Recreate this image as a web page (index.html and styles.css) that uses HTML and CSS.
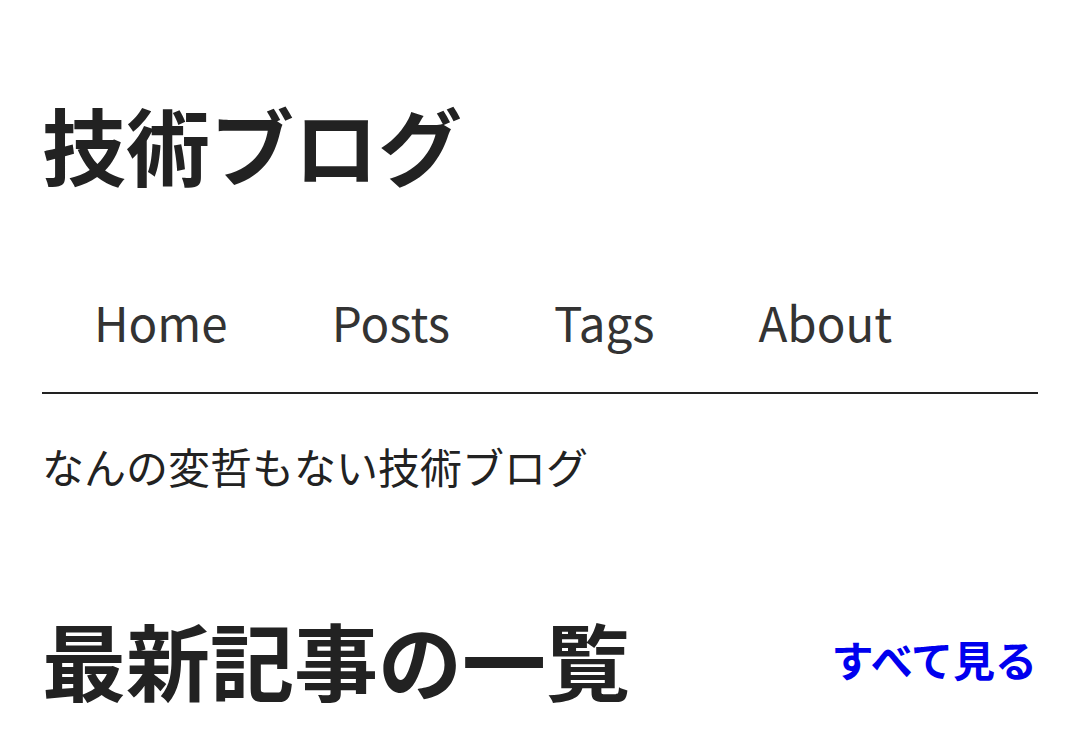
FILE: index.html
```html
<!DOCTYPE html>
<html lang="ja">
<head>
<meta charset="utf-8">
<title>技術ブログ</title>
<link rel="stylesheet" href="styles.css">
</head>
<body>
<header class="site-header">
  <h1 class="site-title">技術ブログ</h1>
  <nav class="site-nav">
    <ul class="nav-list">
      <li><a class="nav-link" href="#">Home</a></li>
      <li><a class="nav-link" href="#">Posts</a></li>
      <li><a class="nav-link" href="#">Tags</a></li>
      <li><a class="nav-link" href="#">About</a></li>
    </ul>
  </nav>
</header>
<main>
  <p class="tagline">なんの変哲もない技術ブログ</p>
  <section class="latest">
    <div class="latest-head">
      <h2 class="latest-title">最新記事の一覧</h2>
      <a class="see-all" href="#">すべて見る</a>
    </div>
  </section>
</main>
</body>
</html>
```
FILE: styles.css
```css
html, body {
  margin: 0;
  padding: 0;
  background: #fff;
}
body {
  padding: 0 42px;
  font-family: "Noto Sans CJK JP", "Noto Sans", sans-serif;
  color: #222;
}
.site-title {
  margin: 94px 0 0;
  font-size: 84px;
  line-height: 100px;
  font-weight: 700;
}
.site-nav {
  margin-top: 98px;
  border-bottom: 2px solid #222;
  padding-bottom: 40px;
}
.nav-list {
  list-style: none;
  margin: 0;
  padding: 0;
  display: flex;
}
.nav-link {
  display: block;
  padding: 0 52px;
  font-size: 47.5px;
  line-height: 60px;
  color: #333;
  text-decoration: none;
}
.tagline {
  margin: 41.6px 0 0;
  font-size: 42px;
  line-height: 60px;
}
.latest-head {
  margin-top: 113px;
  display: flex;
  justify-content: space-between;
  align-items: center;
}
.latest-title {
  margin: 0;
  font-size: 84px;
  line-height: 100px;
  font-weight: 700;
}
.see-all {
  font-size: 42px;
  font-weight: 700;
  color: #0000ee;
  text-decoration: none;
  margin-right: 1px;
}
```
